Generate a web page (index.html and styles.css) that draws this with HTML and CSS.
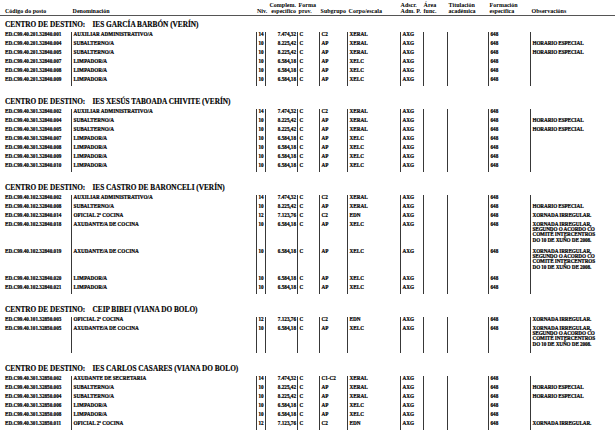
FILE: index.html
```html
<!DOCTYPE html>
<html lang="gl">
<head>
<meta charset="utf-8">
<title>Relación de postos</title>
<link rel="stylesheet" href="styles.css">
</head>
<body>
<table class="report">
  <colgroup>
    <col class="w-code"><col class="w-den"><col class="w-niv"><col class="w-amt"><col class="w-forma"><col class="w-sub"><col class="w-corpo"><col class="w-adscr"><col class="w-area"><col class="w-tit"><col class="w-form"><col class="w-obs">
  </colgroup>
  <thead>
    <tr>
      <th class="code">Código do posto</th>
      <th>Denominación</th>
      <th class="nivh">Niv.</th>
      <th class="num">Complem.<br>específico</th>
      <th>Forma<br>prov.</th>
      <th>Subgrupo</th>
      <th>Corpo/escala</th>
      <th class="tight">Adscr.<br>Adm. P.</th>
      <th class="tight">Área<br>func.</th>
      <th>Titulación<br>académica</th>
      <th>Formación<br>específica</th>
      <th>Observacións</th>
    </tr>
  </thead>
  <tbody>
    <tr class="title first"><td colspan="12"><span class="label">CENTRO DE DESTINO:</span>IES GARCÍA BARBÓN (VERÍN)</td></tr>
    <tr class="row"><td class="code">ED.C99.40.201.32840.001</td><td>AUXILIAR ADMINISTRATIVO/A</td><td class="niv">14</td><td class="amt">7.474,32</td><td>C</td><td>C2</td><td>XERAL</td><td>AXG</td><td></td><td></td><td>648</td><td class="obs"></td></tr>
    <tr class="row"><td class="code">ED.C99.40.201.32840.004</td><td>SUBALTERNO/A</td><td class="niv">10</td><td class="amt">8.225,42</td><td>C</td><td>AP</td><td>XERAL</td><td>AXG</td><td></td><td></td><td>648</td><td class="obs">HORARIO ESPECIAL</td></tr>
    <tr class="row"><td class="code">ED.C99.40.201.32840.005</td><td>SUBALTERNO/A</td><td class="niv">10</td><td class="amt">8.225,42</td><td>C</td><td>AP</td><td>XERAL</td><td>AXG</td><td></td><td></td><td>648</td><td class="obs">HORARIO ESPECIAL</td></tr>
    <tr class="row"><td class="code">ED.C99.40.201.32840.007</td><td>LIMPADOR/A</td><td class="niv">10</td><td class="amt">6.584,18</td><td>C</td><td>AP</td><td>XELC</td><td>AXG</td><td></td><td></td><td>648</td><td class="obs"></td></tr>
    <tr class="row"><td class="code">ED.C99.40.201.32840.008</td><td>LIMPADOR/A</td><td class="niv">10</td><td class="amt">6.584,18</td><td>C</td><td>AP</td><td>XELC</td><td>AXG</td><td></td><td></td><td>648</td><td class="obs"></td></tr>
    <tr class="row"><td class="code">ED.C99.40.201.32840.009</td><td>LIMPADOR/A</td><td class="niv">10</td><td class="amt">6.584,18</td><td>C</td><td>AP</td><td>XELC</td><td>AXG</td><td></td><td></td><td>648</td><td class="obs"></td></tr>

    <tr class="title"><td colspan="12"><span class="label">CENTRO DE DESTINO:</span>IES XESÚS TABOADA CHIVITE (VERÍN)</td></tr>
    <tr class="row"><td class="code">ED.C99.40.301.32840.002</td><td>AUXILIAR ADMINISTRATIVO/A</td><td class="niv">14</td><td class="amt">7.474,32</td><td>C</td><td>C2</td><td>XERAL</td><td>AXG</td><td></td><td></td><td>648</td><td class="obs"></td></tr>
    <tr class="row"><td class="code">ED.C99.40.301.32840.004</td><td>SUBALTERNO/A</td><td class="niv">10</td><td class="amt">8.225,42</td><td>C</td><td>AP</td><td>XERAL</td><td>AXG</td><td></td><td></td><td>648</td><td class="obs">HORARIO ESPECIAL</td></tr>
    <tr class="row"><td class="code">ED.C99.40.301.32840.005</td><td>SUBALTERNO/A</td><td class="niv">10</td><td class="amt">8.225,42</td><td>C</td><td>AP</td><td>XERAL</td><td>AXG</td><td></td><td></td><td>648</td><td class="obs">HORARIO ESPECIAL</td></tr>
    <tr class="row"><td class="code">ED.C99.40.301.32840.007</td><td>LIMPADOR/A</td><td class="niv">10</td><td class="amt">6.584,18</td><td>C</td><td>AP</td><td>XELC</td><td>AXG</td><td></td><td></td><td>648</td><td class="obs"></td></tr>
    <tr class="row"><td class="code">ED.C99.40.301.32840.008</td><td>LIMPADOR/A</td><td class="niv">10</td><td class="amt">6.584,18</td><td>C</td><td>AP</td><td>XELC</td><td>AXG</td><td></td><td></td><td>648</td><td class="obs"></td></tr>
    <tr class="row"><td class="code">ED.C99.40.301.32840.009</td><td>LIMPADOR/A</td><td class="niv">10</td><td class="amt">6.584,18</td><td>C</td><td>AP</td><td>XELC</td><td>AXG</td><td></td><td></td><td>648</td><td class="obs"></td></tr>
    <tr class="row"><td class="code">ED.C99.40.301.32840.010</td><td>LIMPADOR/A</td><td class="niv">10</td><td class="amt">6.584,18</td><td>C</td><td>AP</td><td>XELC</td><td>AXG</td><td></td><td></td><td>648</td><td class="obs"></td></tr>

    <tr class="title"><td colspan="12"><span class="label">CENTRO DE DESTINO:</span>IES CASTRO DE BARONCELI (VERÍN)</td></tr>
    <tr class="row"><td class="code">ED.C99.40.102.32840.002</td><td>AUXILIAR ADMINISTRATIVO/A</td><td class="niv">14</td><td class="amt">7.474,32</td><td>C</td><td>C2</td><td>XERAL</td><td>AXG</td><td></td><td></td><td>648</td><td class="obs"></td></tr>
    <tr class="row"><td class="code">ED.C99.40.102.32840.008</td><td>SUBALTERNO/A</td><td class="niv">10</td><td class="amt">8.225,42</td><td>C</td><td>AP</td><td>XERAL</td><td>AXG</td><td></td><td></td><td>648</td><td class="obs">HORARIO ESPECIAL</td></tr>
    <tr class="row"><td class="code">ED.C99.40.102.32840.014</td><td>OFICIAL 2ª COCIÑA</td><td class="niv">12</td><td class="amt">7.123,76</td><td>C</td><td>C2</td><td>EDÑ</td><td>AXG</td><td></td><td></td><td>648</td><td class="obs">XORNADA IRREGULAR.</td></tr>
    <tr class="row"><td class="code">ED.C99.40.102.32840.018</td><td>AXUDANTE/A DE COCIÑA</td><td class="niv">10</td><td class="amt">6.584,18</td><td>C</td><td>AP</td><td>XELC</td><td>AXG</td><td></td><td></td><td>648</td><td class="obs multi">XORNADA IRREGULAR,<br>SEGUNDO O ACORDO CO<br>COMITÉ INTERCENTROS<br>DO 10 DE XUÑO DE 2008.</td></tr>
    <tr class="row"><td class="code">ED.C99.40.102.32840.019</td><td>AXUDANTE/A DE COCIÑA</td><td class="niv">10</td><td class="amt">6.584,18</td><td>C</td><td>AP</td><td>XELC</td><td>AXG</td><td></td><td></td><td>648</td><td class="obs multi">XORNADA IRREGULAR,<br>SEGUNDO O ACORDO CO<br>COMITÉ INTERCENTROS<br>DO 10 DE XUÑO DE 2008.</td></tr>
    <tr class="row"><td class="code">ED.C99.40.102.32840.020</td><td>LIMPADOR/A</td><td class="niv">10</td><td class="amt">6.584,18</td><td>C</td><td>AP</td><td>XELC</td><td>AXG</td><td></td><td></td><td>648</td><td class="obs"></td></tr>
    <tr class="row"><td class="code">ED.C99.40.102.32840.021</td><td>LIMPADOR/A</td><td class="niv">10</td><td class="amt">6.584,18</td><td>C</td><td>AP</td><td>XELC</td><td>AXG</td><td></td><td></td><td>648</td><td class="obs"></td></tr>

    <tr class="title"><td colspan="12"><span class="label">CENTRO DE DESTINO:</span>CEIP BIBEI (VIANA DO BOLO)</td></tr>
    <tr class="row"><td class="code">ED.C99.40.101.32850.003</td><td>OFICIAL 2ª COCIÑA</td><td class="niv">12</td><td class="amt">7.123,76</td><td>C</td><td>C2</td><td>EDÑ</td><td>AXG</td><td></td><td></td><td>648</td><td class="obs">XORNADA IRREGULAR.</td></tr>
    <tr class="row"><td class="code">ED.C99.40.101.32850.005</td><td>AXUDANTE/A DE COCIÑA</td><td class="niv">10</td><td class="amt">6.584,18</td><td>C</td><td>AP</td><td>XELC</td><td>AXG</td><td></td><td></td><td>648</td><td class="obs multi">XORNADA IRREGULAR,<br>SEGUNDO O ACORDO CO<br>COMITÉ INTERCENTROS<br>DO 10 DE XUÑO DE 2008.</td></tr>

    <tr class="title"><td colspan="12"><span class="label">CENTRO DE DESTINO:</span>IES CARLOS CASARES (VIANA DO BOLO)</td></tr>
    <tr class="row"><td class="code">ED.C99.40.301.32850.002</td><td>AXUDANTE DE SECRETARÍA</td><td class="niv">14</td><td class="amt">7.474,32</td><td>C</td><td>C1-C2</td><td>XERAL</td><td>AXG</td><td></td><td></td><td>648</td><td class="obs"></td></tr>
    <tr class="row"><td class="code">ED.C99.40.301.32850.003</td><td>SUBALTERNO/A</td><td class="niv">10</td><td class="amt">8.225,42</td><td>C</td><td>AP</td><td>XERAL</td><td>AXG</td><td></td><td></td><td>648</td><td class="obs">HORARIO ESPECIAL</td></tr>
    <tr class="row"><td class="code">ED.C99.40.301.32850.004</td><td>SUBALTERNO/A</td><td class="niv">10</td><td class="amt">8.225,42</td><td>C</td><td>AP</td><td>XERAL</td><td>AXG</td><td></td><td></td><td>648</td><td class="obs">HORARIO ESPECIAL</td></tr>
    <tr class="row"><td class="code">ED.C99.40.301.32850.006</td><td>LIMPADOR/A</td><td class="niv">10</td><td class="amt">6.584,18</td><td>C</td><td>AP</td><td>XELC</td><td>AXG</td><td></td><td></td><td>648</td><td class="obs"></td></tr>
    <tr class="row"><td class="code">ED.C99.40.301.32850.008</td><td>LIMPADOR/A</td><td class="niv">10</td><td class="amt">6.584,18</td><td>C</td><td>AP</td><td>XELC</td><td>AXG</td><td></td><td></td><td>648</td><td class="obs"></td></tr>
    <tr class="row"><td class="code">ED.C99.40.301.32850.011</td><td>OFICIAL 2ª COCIÑA</td><td class="niv">12</td><td class="amt">7.123,76</td><td>C</td><td>C2</td><td>EDÑ</td><td>AXG</td><td></td><td></td><td>648</td><td class="obs">XORNADA IRREGULAR.</td></tr>
  </tbody>
</table>
</body>
</html>
```

FILE: styles.css
```css
html, body {
  margin: 0;
  padding: 0;
  background: #ffffff;
}

body {
  font-family: "Liberation Serif", "Times New Roman", serif;
  font-weight: bold;
  color: #000000;
  overflow: hidden;
}

.report {
  width: 615px;
  table-layout: fixed;
  border-collapse: separate;
  border-spacing: 0;
}

.w-code { width: 71px; }
.w-den { width: 185px; }
.w-niv { width: 9px; }
.w-amt { width: 32px; }
.w-forma { width: 22px; }
.w-sub { width: 28px; }
.w-corpo { width: 53px; }
.w-adscr { width: 23px; }
.w-area { width: 24px; }
.w-tit { width: 41px; }
.w-form { width: 42px; }
.w-obs { width: 85px; }

/* header */
.report th {
  font-size: 6px;
  line-height: 6.5px;
  font-weight: bold;
  text-align: left;
  vertical-align: bottom;
  white-space: nowrap;
  overflow: visible;
  padding: 1.5px 0 0 1.6px;
  border-bottom: 1px solid #555555;
}

.report th.code { padding-left: 5px; }
.report th.nivh { padding-left: 1px; }
.report th.num { text-align: right; padding: 1.5px 1px 0 0; }
.report th.tight { padding-left: 0.6px; }

/* section titles */
.title td {
  font-size: 7.3px;
  line-height: 9px;
  white-space: nowrap;
  padding: 11px 0 3px 5px;
  -webkit-text-stroke: 0.15px #000000;
}

.title.first td { padding-top: 4px; }

.label {
  display: inline-block;
  width: 87.5px;
}

/* data rows */
.row { height: 9px; }

.row td {
  font-size: 5.2px;
  line-height: 5.4px;
  vertical-align: top;
  white-space: nowrap;
  overflow: hidden;
  padding: 0 0 0 1.5px;
  border-left: 1px solid #383838;
  -webkit-text-stroke: 0.2px #000000;
}

.row td.code {
  border-left: none;
  padding-left: 5px;
}

.row td.niv {
  text-align: center;
  padding-left: 0;
}

.row td.amt {
  text-align: right;
  padding: 0 1px 0 0;
}

.row td.obs {
  font-size: 5.2px;
  letter-spacing: -0.1px;
}

.row td.multi {
  padding-bottom: 5.4px;
}
```
